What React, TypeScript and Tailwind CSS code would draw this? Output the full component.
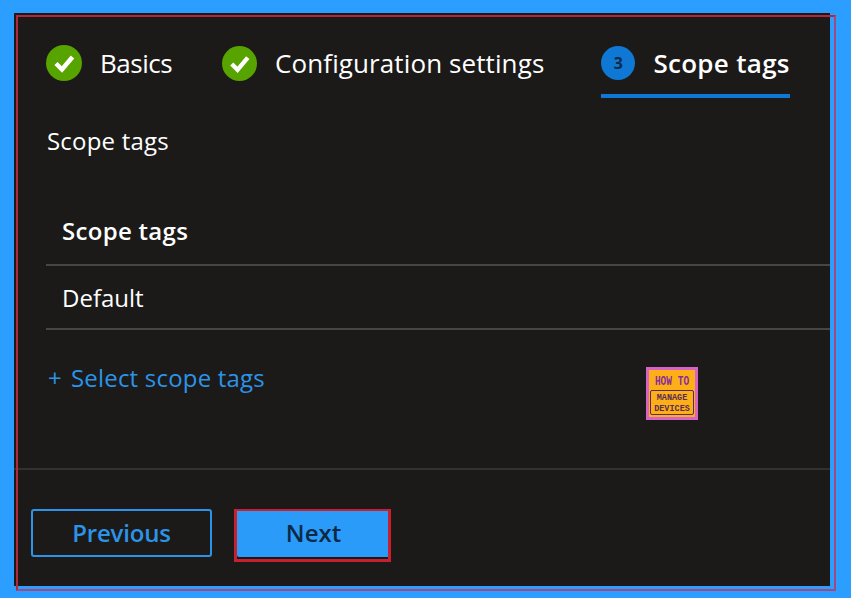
const font = { fontFamily: '"Open Sans", "Noto Sans", sans-serif' };

function CheckStep({ label, tracking, size }: { label: string; tracking: string; size: string }) {
  return (
    <div className="flex items-center gap-[18px]">
      <span className={`flex items-center justify-center rounded-full bg-[#57a300] ${size}`}>
        <svg viewBox="0 0 36 36" className="h-full w-full" fill="none" stroke="#fff" strokeWidth="4.5">
          <path d="M10 18.5l6 6L26.5 12" />
        </svg>
      </span>
      <span className={`text-[26px] leading-[36px] text-white ${tracking}`}>{label}</span>
    </div>
  );
}

function Logo() {
  return (
    <div className="absolute left-[646px] top-[367px] flex h-[53px] w-[52px] flex-col items-center border-[3px] border-[#d663c8] bg-[#fdaf17] font-['Liberation_Mono'] font-bold text-[#8a2a9c]">
      <span className="mt-[6px] origin-top scale-y-[1.3] whitespace-nowrap text-[9.5px] leading-[10px]">HOW TO</span>
      <div className="mt-[4px] flex h-[25px] w-[44px] items-center justify-center rounded-[2px] border border-[#5b2a55] text-[8.5px] text-[#5b2a55]">
        <span className="scale-y-110 whitespace-nowrap text-center leading-[10px]">
          MANAGE
          <br />
          DEVICES
        </span>
      </div>
    </div>
  );
}

export default function App() {
  return (
    <div className="relative h-[598px] w-[851px] overflow-hidden bg-[#2b9eff] pl-[14px] pt-[13px]" style={font}>
      <div className="flex h-[573px] w-[816px] flex-col bg-[#1b1a19] text-white">
        {/* Steps */}
        <div className="flex h-[85px] items-start pl-[32px] pt-[32px]">
          <CheckStep label="Basics" tracking="tracking-[-0.5px]" size="h-9 w-9" />
          <div className="ml-[50px]">
            <CheckStep label="Configuration settings" tracking="tracking-[0.1px]" size="h-[35px] w-[35px]" />
          </div>
          <div className="ml-[57px] flex h-[53px] flex-col border-b-[4px] border-[#0f78d4]">
            <div className="flex items-center gap-[18px]">
              <span className="flex h-[34px] w-[34px] items-center justify-center rounded-full bg-[#0f78d4] text-[16px] font-bold text-[#0b2a4a]">
                3
              </span>
              <span className="text-[26px] font-semibold leading-[36px] tracking-[0.3px]">Scope tags</span>
            </div>
          </div>
        </div>

        <p className="mt-[27px] pl-[33px] text-[24px] leading-[32px] tracking-[0.2px]">Scope tags</p>

        {/* Table */}
        <div className="mt-[42px] pl-[32px]">
          <div className="flex h-[67px] items-center border-b-2 border-[#484644] pb-[2px] pl-[16px] text-[24px] font-semibold tracking-[0.3px]">
            Scope tags
          </div>
          <div className="flex h-[64px] items-center border-b-2 border-[#484644] pl-[16px] pt-[2px] text-[24px]">
            Default
          </div>
        </div>

        <a className="mt-[32px] flex pl-[34px] text-[24px] leading-[32px] tracking-[0.2px] text-[#2b94e8]">
          <span>+</span>
          <span className="ml-[9px]">Select scope tags</span>
        </a>

        <div className="mt-[74px] border-b-2 border-[#323130]" />

        {/* Footer */}
        <div className="flex items-start gap-[25px] pl-[17px] pt-[39px]">
          <button className="flex h-[48px] w-[181px] items-center justify-center rounded-[3px] border-2 border-[#2b94e8] text-[24px] font-semibold tracking-[-0.2px] text-[#2b94e8]">
            Previous
          </button>
          <button className="flex h-[48px] w-[153px] items-center justify-center rounded-[2px] bg-[#2b9bfa] text-[24px] font-semibold text-[#0d2a45]">
            Next
          </button>
        </div>
      </div>

      <Logo />

      {/* Red annotation boxes */}
      <div className="absolute left-[16px] top-[15px] h-[576px] w-[820px] border-2 border-[#b02a3c] border-r-[#a04a80] border-b-[#a04a80]" />
      <div className="absolute left-[234px] top-[509px] h-[53px] w-[157px] border-[3px] border-t-2 border-[#c8202f]" />
    </div>
  );
}
